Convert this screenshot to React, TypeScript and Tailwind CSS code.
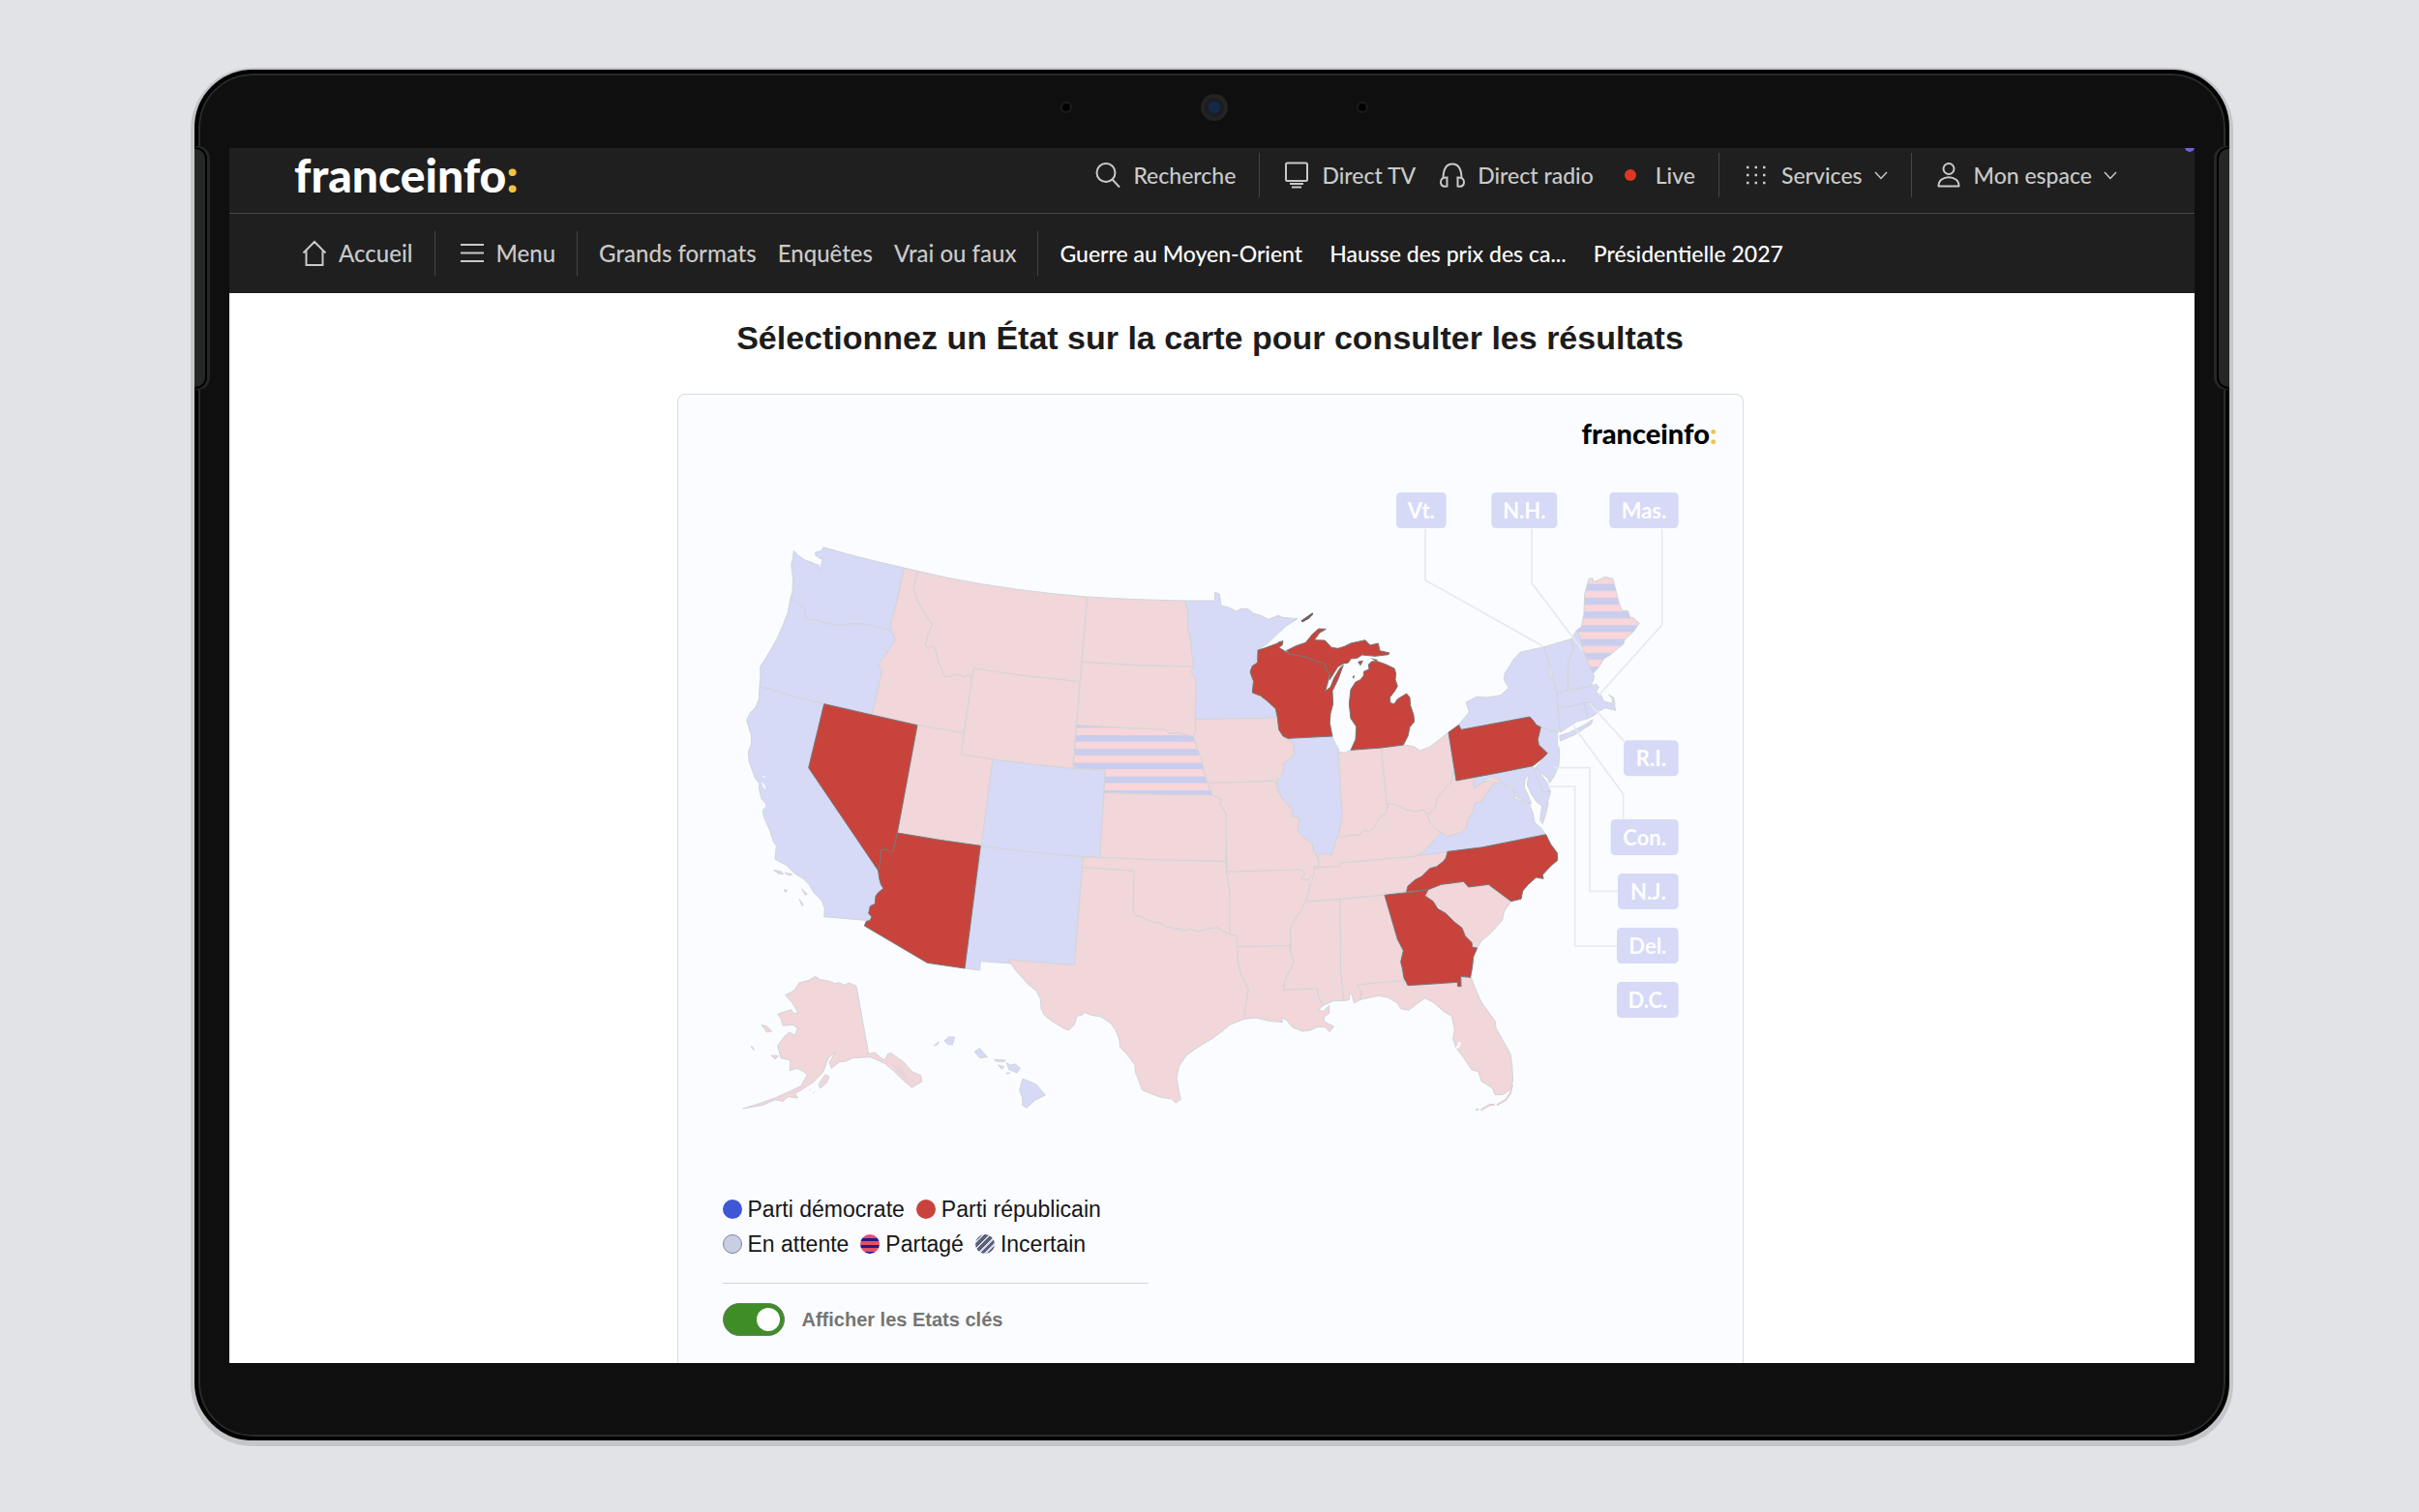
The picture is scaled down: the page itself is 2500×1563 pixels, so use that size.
import { useState, type ReactNode } from "react";
import clsx from "clsx";

type Party = "dem" | "rep" | "split";
type Sheet = "west" | "mid" | "east" | "southeast" | "south" | "pacific";

interface StateShape {
  id: string;
  party: Party;
  sheet: Sheet;
  swing?: boolean;
  d: string;
}

// The map is drawn in several sheets, each with its own origin
const SHEETS: Record<Sheet, string> = {
  west: "translate(0 0)",
  mid: "translate(1020 90)",
  east: "translate(1920 -150)",
  southeast: "translate(1920 750)",
  south: "translate(720 990)",
  pacific: "translate(-120 1350)",
};

const STATES: StateShape[] = [
  // West
  { id: "WA", party: "dem", sheet: "west", d: "M238,115 L250,128 L275,145 L290,149 L303,156 L316,160 L320,174 L325,152 L328,140 L318,139 L312,133 L306,130 L305,120 L322,116 L330,104 L400,124 L490,147 L580,168 L568,225 L556,280 L540,335 L540,361 L500,352 L460,343 L420,341 L380,347 L345,341 L310,331 L285,328 L274,318 L272,298 L262,284 L246,274 L228,262 L234,240 L236,200 L230,160 L235,140Z" },
  { id: "OR", party: "dem", sheet: "west", d: "M228,262 L246,274 L262,284 L272,298 L274,318 L285,328 L310,331 L345,341 L380,347 L420,341 L460,343 L500,352 L540,361 L545,375 L554,390 L545,405 L530,428 L515,448 L503,465 L505,478 L513,484 L500,540 L480,622 L332,590 L240,568 L160,543 L132,537 L135,500 L134,475 L150,450 L165,425 L185,390 L205,345 L220,305Z" },
  { id: "CA", party: "dem", sheet: "west", d: "M132,537 L160,543 L240,568 L332,590 L284,788 L500,1107 L503,1130 L516,1162 L500,1175 L492,1186 L490,1210 L476,1217 L472,1240 L480,1250 L474,1262 L332,1250 L334,1225 L325,1200 L300,1175 L285,1150 L270,1134 L240,1115 L215,1090 L180,1072 L184,1030 L175,1018 L165,985 L145,940 L142,920 L153,908 L151,898 L138,885 L130,850 L132,838 L118,820 L100,770 L97,740 L106,715 L107,690 L92,640 L105,615 L120,600 L130,575Z M175,1105 L200,1110 L206,1118 L190,1116Z M210,1114 L234,1118 L225,1122Z M208,1166 L218,1168 L212,1174Z M263,1163 L280,1180 L274,1183Z M255,1196 L268,1212 L264,1216Z" },
  { id: "ID", party: "rep", sheet: "west", d: "M580,168 L622,178 L611,225 L612,243 L622,270 L632,290 L650,320 L668,345 L655,370 L647,410 L655,417 L672,410 L680,430 L686,460 L697,480 L706,505 L722,505 L745,498 L770,508 L780,496 L790,515 L766,680 L621,656 L480,624 L513,484 L505,478 L503,465 L515,448 L530,428 L554,390 L540,361 L540,335 L556,280 L568,225Z" },
  { id: "MT", party: "rep", sheet: "west", d: "M622,178 L720,200 L820,218 L940,236 L1050,249 L1148,258 L1126,521 L960,504 L797,480 L790,515 L780,496 L770,508 L745,498 L722,505 L706,505 L697,480 L686,460 L680,430 L672,410 L655,417 L647,410 L655,370 L668,345 L650,320 L632,290 L622,270 L612,243 L611,225Z" },
  { id: "WY", party: "rep", sheet: "west", d: "M797,480 L960,504 L1126,521 L1103,790 L980,778 L855,762 L757,747 L766,680 L790,515Z" },
  { id: "UT", party: "rep", sheet: "west", d: "M621,656 L766,680 L757,747 L855,762 L820,1030 L559,990Z" },
  { id: "CO", party: "dem", sheet: "west", d: "M855,762 L980,778 L1103,790 L1203,798 L1188,1067 L1080,1060 L950,1047 L820,1030Z" },
  { id: "NM", party: "dem", sheet: "west", d: "M820,1030 L950,1047 L1080,1060 L1135,1067 L1110,1400 L905,1385 L909,1395 L817,1388 L815,1416 L768,1410Z" },
  // Plains and Midwest
  { id: "ND", party: "rep", sheet: "mid", d: "M128,168 L280,176 L431,180 L440,215 L440,260 L448,300 L452,340 L459,384 L280,380 L111,370Z" },
  { id: "SD", party: "rep", sheet: "mid", d: "M111,370 L280,380 L459,384 L450,400 L465,425 L463,548 L465,575 L458,603 L435,597 L415,590 L385,592 L368,580 L230,574 L95,566Z" },
  { id: "NE", party: "split", sheet: "mid", d: "M95,566 L230,574 L368,580 L385,592 L415,590 L435,597 L458,603 L470,640 L482,670 L490,710 L500,745 L517,783 L350,781 L180,775 L183,706 L85,698Z" },
  { id: "KS", party: "rep", sheet: "mid", d: "M180,775 L350,781 L517,783 L530,790 L545,795 L540,810 L558,840 L558,988 L360,984 L167,976Z" },
  { id: "OK", party: "rep", sheet: "south", d: "M415,75 L467,76 L660,84 L858,89 L860,120 L870,180 L870,315 L850,305 L830,294 L800,298 L770,306 L745,298 L722,305 L715,296 L700,299 L685,291 L675,294 L660,281 L635,277 L605,267 L600,260 L580,258 L570,245 L573,118 L412,107Z" },
  { id: "TX", party: "rep", sheet: "south", d: "M412,107 L573,118 L570,245 L580,258 L600,260 L605,267 L635,277 L660,281 L675,294 L685,291 L700,299 L715,296 L722,305 L745,298 L770,306 L800,298 L830,294 L850,305 L870,315 L893,320 L895,400 L905,440 L928,485 L920,530 L913,578 L870,595 L850,612 L820,635 L770,665 L735,690 L712,725 L705,760 L712,800 L718,828 L712,830 L703,838 L690,825 L655,820 L625,808 L598,797 L585,760 L578,745 L576,720 L550,685 L530,665 L527,640 L515,610 L500,590 L470,570 L440,565 L420,557 L412,565 L396,568 L388,595 L370,612 L355,606 L320,585 L295,565 L285,545 L283,515 L270,490 L245,470 L205,425 L183,393 L388,410Z" },
  { id: "MN", party: "dem", sheet: "mid", d: "M431,180 L523,180 L524,153 L538,160 L543,195 L570,202 L590,212 L605,205 L625,205 L645,220 L665,225 L690,238 L720,226 L735,232 L780,236 L745,258 L715,285 L690,310 L665,328 L657,335 L656,370 L640,385 L633,400 L638,430 L640,465 L665,480 L685,490 L712,515 L718,543 L463,548 L465,425 L450,400 L459,384 L452,340 L448,300 L440,260 L440,215Z" },
  { id: "IA", party: "rep", sheet: "mid", d: "M463,548 L718,543 L722,580 L735,595 L750,607 L768,625 L770,655 L760,670 L735,685 L738,705 L720,725 L717,748 L705,738 L600,743 L500,745 L490,710 L482,670 L470,640 L458,603 L465,575Z" },
  { id: "MO", party: "rep", sheet: "mid", d: "M500,745 L600,743 L705,738 L717,748 L718,765 L735,795 L765,830 L765,850 L788,853 L780,890 L800,915 L825,930 L830,955 L845,975 L848,1000 L832,1008 L830,1030 L820,1045 L790,1046 L802,1028 L795,1014 L560,1021 L558,840 L540,810 L545,795 L530,790 L517,783Z" },
  { id: "IL", party: "dem", sheet: "mid", d: "M750,607 L888,600 L893,615 L907,640 L918,845 L915,870 L905,900 L903,930 L895,940 L885,968 L855,962 L843,978 L830,955 L825,930 L800,915 L780,890 L788,853 L765,850 L765,830 L735,795 L718,765 L717,740 L738,705 L735,685 L760,670 L770,655 L768,625Z" },
  { id: "IN", party: "rep", sheet: "mid", d: "M906,648 L925,652 L945,643 L1040,636 L1058,825 L1050,845 L1035,850 L1020,880 L1003,897 L985,890 L970,908 L950,906 L930,910 L905,914 L915,870 L918,845Z" },
  { id: "AR", party: "rep", sheet: "mid", d: "M560,1021 L795,1014 L802,1028 L790,1046 L820,1045 L815,1080 L805,1113 L785,1150 L765,1180 L757,1200 L760,1225 L757,1250 L593,1253 L593,1220 L570,1215 L570,1080Z" },
  { id: "TN", party: "rep", sheet: "mid", d: "M832,1008 L910,1003 L912,993 L1140,972 L1250,957 L1245,975 L1225,995 L1195,1020 L1170,1040 L1140,1055 L1120,1080 L1050,1092 L910,1105 L805,1113 L815,1080 L825,1045 L830,1030Z" },
  { id: "LA", party: "rep", sheet: "south", d: "M893,353 L1057,350 L1058,370 L1070,400 L1055,430 L1040,460 L1037,487 L1142,482 L1145,510 L1160,535 L1145,550 L1160,553 L1178,535 L1178,560 L1163,570 L1162,585 L1192,600 L1180,617 L1165,602 L1140,602 L1120,612 L1095,615 L1065,603 L1045,580 L1030,573 L1034,587 L990,583 L950,573 L913,578 L920,530 L928,485 L905,440 L895,400Z" },
  { id: "MS", party: "rep", sheet: "south", d: "M1105,213 L1212,206 L1214,430 L1224,520 L1190,521 L1160,535 L1145,510 L1142,482 L1037,487 L1040,460 L1055,430 L1070,400 L1058,370 L1060,325 L1057,300 L1065,280 L1085,250Z" },
  { id: "AL", party: "rep", sheet: "southeast", d: "M12,445 L150,433 L190,570 L208,605 L200,640 L205,670 L212,700 L65,711 L78,735 L75,757 L55,767 L48,738 L42,740 L40,758 L24,760 L14,670Z" },
  { id: "FL", party: "rep", sheet: "southeast", d: "M65,711 L205,698 L222,714 L378,704 L380,716 L388,716 L386,688 L418,688 L430,720 L450,765 L493,825 L495,845 L540,925 L545,960 L548,1010 L535,1040 L515,1052 L492,1052 L485,1032 L450,1010 L440,980 L420,975 L390,930 L372,908 L362,880 L367,850 L358,808 L335,795 L300,765 L275,752 L250,770 L225,790 L200,785 L190,768 L160,750 L130,745 L75,757 L78,735Z" },
  { id: "SC", party: "rep", sheet: "southeast", d: "M275,435 L285,416 L325,400 L395,391 L408,398 L410,408 L472,400 L542,452 L520,485 L515,510 L480,550 L450,575 L437,597 L422,595 L420,580 L400,560 L390,535 L365,515 L340,490 L300,452Z" },
  // East
  { id: "OH", party: "rep", sheet: "east", d: "M140,876 L208,867 L240,872 L260,885 L290,873 L320,850 L348,828 L365,940 L358,980 L330,1010 L315,1030 L305,1065 L285,1083 L270,1068 L245,1074 L215,1068 L190,1055 L162,1048 L158,1065Z" },
  { id: "KY", party: "rep", sheet: "east", d: "M158,1065 L162,1048 L190,1055 L215,1068 L245,1074 L270,1068 L283,1085 L290,1105 L305,1125 L325,1138 L270,1200 L245,1212 L12,1233 L10,1243 L-68,1248 L-52,1240 L-57,1218 L-45,1202 L-15,1208 L-5,1180 L3,1152 L30,1150 L50,1146 L70,1148 L85,1130 L103,1137 L120,1120 L135,1090 L150,1085Z" },
  { id: "WV", party: "rep", sheet: "east", d: "M370,978 L425,970 L428,1000 L450,985 L480,975 L490,962 L515,985 L490,985 L475,1005 L450,1045 L430,1048 L425,1075 L410,1095 L405,1122 L385,1140 L345,1152 L325,1138 L305,1125 L290,1105 L283,1085 L305,1065 L315,1030 L330,1010 L358,980 L364,945Z" },
  { id: "VA", party: "dem", sheet: "east", d: "M270,1200 L325,1138 L345,1152 L385,1140 L405,1122 L410,1095 L425,1075 L430,1048 L450,1045 L475,1005 L490,985 L515,987 L548,1005 L556,1035 L598,1047 L610,1080 L615,1108 L635,1125 L648,1143 L450,1185 L345,1198 L245,1212Z M638,1055 L658,1045 L650,1080 L640,1112 L632,1100Z" },
  { id: "MD", party: "dem", sheet: "east", d: "M425,968 L610,935 L625,960 L640,1012 L665,1010 L655,1045 L640,1058 L622,1045 L605,1020 L592,990 L598,955 L585,975 L583,1000 L598,1030 L605,1050 L560,1030 L548,1000 L515,985 L490,962 L450,985 L428,1000Z" },
  { id: "DE", party: "dem", sheet: "east", d: "M612,940 L625,936 L635,960 L655,985 L663,1010 L640,1014Z" },
  { id: "NJ", party: "dem", sheet: "east", d: "M632,812 L685,828 L685,865 L692,880 L690,930 L675,965 L662,985 L655,970 L630,950 L620,935 L655,893 L628,865Z" },
  { id: "NY", party: "dem", sheet: "east", d: "M385,820 L381,803 L412,765 L402,735 L435,718 L470,720 L510,713 L535,690 L520,665 L523,645 L550,602 L570,580 L645,563 L655,600 L662,640 L684,705 L688,755 L692,800 L690,828 L632,812 L612,795 L600,780Z M692,838 L720,830 L770,805 L795,788 L790,803 L740,835 L695,855Z" },
  { id: "VT", party: "dem", sheet: "east", d: "M645,563 L730,538 L735,570 L720,605 L718,697 L684,707 L670,650 L655,600Z" },
  { id: "NH", party: "dem", sheet: "east", d: "M730,538 L745,512 L755,530 L765,570 L785,625 L800,655 L790,685 L718,697 L720,605 L735,570Z" },
  { id: "ME", party: "split", sheet: "east", d: "M745,512 L760,500 L768,460 L770,400 L783,352 L795,350 L798,362 L815,355 L832,346 L858,352 L875,420 L885,450 L905,452 L910,470 L922,474 L940,490 L920,518 L895,540 L890,555 L870,570 L850,588 L830,600 L815,625 L797,645 L785,625 L765,570 L755,530Z" },
  { id: "MA", party: "dem", sheet: "east", d: "M684,707 L790,685 L805,678 L814,688 L805,703 L820,712 L830,732 L862,740 L866,760 L835,752 L815,762 L800,748 L785,735 L770,738 L688,755Z M845,712 L860,720 L864,742 L857,738 L855,722Z" },
  { id: "CT", party: "dem", sheet: "east", d: "M688,755 L770,738 L780,785 L745,795 L695,828 L690,790Z" },
  { id: "RI", party: "dem", sheet: "east", d: "M770,738 L792,734 L812,765 L800,775 L780,785Z" },
  // Alaska and Hawaii
  { id: "AK", party: "rep", sheet: "pacific", d: "M425,85 L440,95 L470,100 L485,107 L500,105 L515,112 L530,105 L552,115 L590,325 L610,321 L625,335 L640,345 L650,325 L660,323 L700,352 L725,380 L752,392 L755,412 L740,420 L725,430 L700,410 L670,380 L640,355 L595,335 L540,338 L520,348 L500,350 L475,370 L468,352 L488,320 L465,338 L450,380 L420,412 L385,435 L362,448 L370,462 L340,458 L325,472 L300,468 L260,485 L240,488 L200,495 L240,483 L300,462 L345,442 L380,425 L400,390 L385,378 L368,370 L345,377 L348,345 L318,338 L308,300 L330,270 L345,258 L362,268 L370,245 L355,235 L325,238 L318,215 L308,202 L350,188 L358,200 L372,198 L352,165 L332,143 L360,128 L375,105 L405,97Z M435,420 L455,390 L468,395 L460,415 L440,432Z M258,235 L275,240 L290,255 L275,258Z M225,302 L230,304 L235,314Z M288,330 L310,332 L300,342Z" },
  { id: "HI", party: "dem", sheet: "pacific", d: "M793,300 L808,287 L803,297Z M825,285 L840,272 L857,274 L850,297 L835,295Z M918,318 L935,308 L958,335 L935,338Z M980,343 L1015,345 L1010,350 L985,348Z M992,360 L1010,365 L1003,373Z M1018,384 L1028,384 L1020,388Z M1018,352 L1030,360 L1045,357 L1060,370 L1050,384 L1025,374Z M1068,402 L1110,420 L1138,453 L1105,470 L1080,493 L1068,485 L1066,460 L1058,437Z" },
  // Swing states come last so that their outlines stay on top
  { id: "NV", party: "rep", swing: true, sheet: "west", d: "M332,590 L480,624 L621,656 L559,990 L553,1020 L547,1045 L538,1051 L524,1040 L508,1043 L507,1075 L500,1107 L284,788Z" },
  { id: "AZ", party: "rep", swing: true, sheet: "west", d: "M559,990 L690,1012 L817,1030 L768,1410 L652,1393 L457,1278 L463,1264 L474,1262 L480,1250 L470,1240 L475,1217 L490,1210 L492,1186 L500,1175 L516,1162 L508,1150 L503,1130 L500,1107 L507,1075 L508,1043 L524,1040 L538,1051 L547,1045 L553,1020Z" },
  { id: "WI", party: "rep", swing: true, sheet: "mid", d: "M657,333 L675,328 L718,312 L722,308 L735,305 L732,318 L722,325 L755,345 L800,353 L845,370 L855,370 L870,385 L870,398 L880,405 L875,430 L866,460 L882,448 L893,420 L912,388 L922,380 L905,425 L888,460 L890,500 L882,530 L880,560 L888,600 L750,607 L735,600 L722,580 L718,543 L712,515 L685,490 L665,475 L640,465 L643,430 L633,400 L640,382 L656,372Z" },
  { id: "MI", party: "rep", swing: true, sheet: "mid", d: "M745,335 L775,320 L805,310 L825,285 L845,267 L868,268 L848,280 L832,302 L865,303 L885,325 L905,328 L925,322 L945,312 L990,302 L1005,318 L1030,312 L1035,335 L1065,342 L1062,347 L1020,352 L980,348 L965,358 L945,360 L938,372 L922,375 L905,385 L880,425 L880,405 L870,398 L870,385 L855,370 L845,370 L800,353 L755,345Z M1000,378 L1010,368 L1028,368 L1055,378 L1080,390 L1085,405 L1083,425 L1090,445 L1080,462 L1066,480 L1068,497 L1080,500 L1090,485 L1118,468 L1128,480 L1130,505 L1140,535 L1142,555 L1128,572 L1122,600 L1108,627 L1040,636 L945,643 L960,610 L962,570 L945,545 L940,500 L945,455 L960,432 L975,425 L985,412 L985,400 L1002,392Z M792,243 L828,220 L812,236Z M968,370 L982,366 L975,380Z" },
  { id: "PA", party: "rep", swing: true, sheet: "east", d: "M348,828 L380,805 L387,820 L600,780 L612,793 L620,805 L634,812 L625,850 L628,867 L655,893 L640,908 L610,932 L490,956 L372,978Z" },
  { id: "NC", party: "rep", swing: true, sheet: "southeast", d: "M345,298 L450,285 L650,245 L665,275 L685,302 L686,325 L665,343 L640,370 L642,382 L620,378 L595,400 L578,420 L573,445 L542,452 L472,400 L410,408 L395,391 L325,400 L285,416 L218,422 L222,405 L245,385 L265,375 L290,350 L310,345 L330,330 L340,318Z" },
  { id: "GA", party: "rep", swing: true, sheet: "southeast", d: "M150,433 L218,425 L285,416 L275,435 L300,452 L315,475 L340,490 L365,515 L390,535 L400,560 L420,580 L422,595 L437,597 L425,625 L422,655 L416,688 L386,685 L387,716 L377,716 L376,703 L222,713 L210,690 L205,660 L200,640 L208,605 L190,570Z" },
];

const DIMMED: Record<Party, string> = {
  dem: "fill-[#d6daf7] stroke-[#d2d5d8]",
  rep: "fill-[#f1d6da] stroke-[#d2d5d8]",
  split: "stroke-[#d2d5d8]",
};

const FULL: Record<Party, string> = {
  dem: "fill-[#3e57d6] stroke-[#777777]",
  rep: "fill-[#c8433c] stroke-[#777777]",
  split: "stroke-[#777777]",
};

const LABELS = [
  { text: "Vt.", x: 186, y: 84, w: 155 },
  { text: "N.H.", x: 481, y: 84, w: 204 },
  { text: "Mas.", x: 847, y: 84, w: 214 },
  { text: "R.I.", x: 891, y: 853, w: 170 },
  { text: "Con.", x: 851, y: 1098, w: 210 },
  { text: "N.J.", x: 873, y: 1266, w: 188 },
  { text: "Del.", x: 870, y: 1434, w: 191 },
  { text: "D.C.", x: 870, y: 1602, w: 191 },
];

function ElectionMap({ keyOnly }: { keyOnly: boolean }) {
  return (
    <svg viewBox="-120 -150 3300 2100" className="block w-full" role="img" aria-label="Carte des résultats par État">
      <defs>
        <pattern id="split-mid" y="597" width="60" height="42.7" patternUnits="userSpaceOnUse">
          <rect width="60" height="43" fill="#f8d6da" />
          <rect width="60" height="20" fill="#c9cdee" />
        </pattern>
        <pattern id="split-east" y="368" width="60" height="42.7" patternUnits="userSpaceOnUse">
          <rect width="60" height="43" fill="#f8d6da" />
          <rect width="60" height="21" fill="#c9cdee" />
        </pattern>
      </defs>
      <g strokeWidth="3" strokeLinejoin="round">
        {STATES.map((s) => {
          const tone = keyOnly && !s.swing ? DIMMED : FULL;
          const fill = s.party === "split" ? (s.sheet === "mid" ? "url(#split-mid)" : "url(#split-east)") : undefined;
          return <path key={s.id} d={s.d} transform={SHEETS[s.sheet]} fill={fill} className={tone[s.party]} />;
        })}
      </g>
      {/* San Francisco bay, Tampa bay, Florida keys */}
      <path d="M141,814 L150,813 L147,820Z M138,832 L144,836 L151,850 L148,856 L142,846Z" fill="#fafcff" />
      <g transform={SHEETS.southeast} fill="none">
        <path d="M372,908 L380,900 L384,890 L378,896" stroke="#fafcff" strokeWidth="7" />
        <path d="M433,1098 H442 M448,1100 L475,1084 L492,1082 M498,1084 L525,1068 L540,1048 L546,1020" stroke="#e0d0d5" strokeWidth="6" />
      </g>
      {/* Michigan straits and Door county islands */}
      <g transform={SHEETS.mid} className="fill-[#8a5552]">
        <path d="M1005,357 L1030,364 L1022,367Z M950,414 L957,412 L954,424Z M926,366 L934,370 L928,376Z" />
        <path d="M790,242 L826,217 L829,221 L814,236 L796,247Z" className="fill-[#6f5f5d]" />
      </g>
      <g transform={SHEETS.pacific} fill="none" stroke="#dcd4d8" strokeWidth="3">
        <path d="M665,360 L690,378 L712,412 M680,355 L700,385 L735,418 M672,372 L705,395 M405,440 L410,436 M418,448 L422,442" />
      </g>
      <g transform={SHEETS.east}>
        <path
          d="M276,197 V356 L640,560 M606,197 V365 L765,575 M1010,197 V495 L815,712 M893,856 L785,738 M890,1098 V1020 L735,808 M675,938 H786 V1321 H873 M655,996 H740 V1491 H870"
          fill="none"
          stroke="#e8e9ed"
          strokeWidth="5"
        />
        {LABELS.map((l) => (
          <g key={l.text}>
            <rect x={l.x} y={l.y} width={l.w} height="111" rx="14" className="fill-[#d6daf7]" />
            <text
              x={l.x + l.w / 2}
              y={l.y + 80}
              textAnchor="middle"
              className="fill-[#fdfdff] font-['Lato',sans-serif] text-[66px] font-bold"
            >
              {l.text}
            </text>
          </g>
        ))}
      </g>
    </svg>
  );
}

function Icon({ children, className = "size-7" }: { children: ReactNode; className?: string }) {
  return (
    <svg viewBox="0 0 28 28" className={clsx("shrink-0", className)} fill="none" stroke="currentColor" strokeWidth="2" aria-hidden="true">
      {children}
    </svg>
  );
}

function Chevron() {
  return (
    <svg viewBox="0 0 14 14" className="ml-3 size-[14px]" fill="none" stroke="currentColor" strokeWidth="1.5" aria-hidden="true">
      <path d="M1 4 L7 10.5 L13 4" />
    </svg>
  );
}

function Separator() {
  return <span className="h-[46px] w-px shrink-0 bg-[#454545]" />;
}

function Logo({ className }: { className: string }) {
  return (
    <a href="#" className={clsx("font-['Lato',sans-serif] font-black", className)}>
      franceinfo<span className="text-[#f2c443]">:</span>
    </a>
  );
}

function Header() {
  return (
    <header className="bg-[#1f1f1f] font-['Lato',sans-serif] text-[23px] leading-7 font-medium whitespace-nowrap text-[#c9c9c9]">
      <div className="flex h-[68px] items-center border-b border-[#484848] pr-20 pb-3 pl-[67px]">
        <Logo className="text-[48px] leading-none text-white" />
        <nav className="ml-auto flex items-center">
          <a href="#" className="flex items-center gap-3">
            <Icon>
              <circle cx="12" cy="11.5" r="9.5" />
              <path d="M18.5 18.5 L26 26.5" />
            </Icon>
            Recherche
          </a>
          <span className="w-6" />
          <Separator />
          <a href="#" className="ml-6 flex items-center gap-3">
            <Icon>
              <rect x="3" y="1.5" width="22" height="18.500" rx="1.5" />
              <path d="M7 23 H21 M9 26.500 H19" />
            </Icon>
            Direct TV
          </a>
          <a href="#" className="ml-6 flex items-center gap-3">
            <Icon>
              <path d="M4.500 18 C4.500 7 8 2.500 14 2.500 C20 2.500 23.500 7 23.500 18" />
              <path d="M8.500 16.500 C4 16 1.500 18.500 2 22 C2.400 25 5 26.500 8.500 25.500 Z M19.500 16.500 C24 16 26.500 18.500 26 22 C25.600 25 23 26.500 19.500 25.500 Z" />
            </Icon>
            Direct radio
          </a>
          <a href="#" className="ml-8 flex items-center gap-5">
            <span className="size-3 rounded-full bg-[#de3721]" />
            Live
          </a>
          <span className="w-6" />
          <Separator />
          <button type="button" className="ml-6 flex items-center">
            <Icon className="mr-3 size-7">
              <path d="M4 6h2.500 M12.500 6h2.500 M21 6h2.500 M4 14h2.500 M12.500 14h2.500 M21 14h2.500 M4 22h2.500 M12.500 22h2.500 M21 22h2.500" strokeWidth="2.500" />
            </Icon>
            Services
            <Chevron />
          </button>
          <span className="w-6" />
          <Separator />
          <button type="button" className="ml-6 flex items-center">
            <Icon className="mr-3 size-7">
              <circle cx="14" cy="7.500" r="5.500" />
              <path d="M3.500 25.500 C3 13 25 13 24.500 25.500 Z" strokeLinejoin="round" />
            </Icon>
            Mon espace
            <Chevron />
          </button>
        </nav>
      </div>

      <nav className="flex h-[82px] items-center pb-px pl-[74px] text-[24px]">
        <a href="#" className="flex items-center gap-[11px]">
          <Icon>
            <path d="M2.500 13.500 L14 2 L25.500 13.500 M5.500 11 V26 H22.500 V11" />
          </Icon>
          Accueil
        </a>
        <span className="w-[22px]" />
        <Separator />
        <button type="button" className="ml-6 flex items-center gap-[11px]">
          <Icon>
            <path d="M2 5 H26 M2 13.500 H26 M2 22 H26" />
          </Icon>
          Menu
        </button>
        <span className="w-[22px]" />
        <Separator />
        <div className="mx-[22px] flex gap-[22px]">
          <a href="#">Grands formats</a>
          <a href="#">Enquêtes</a>
          <a href="#">Vrai ou faux</a>
        </div>
        <Separator />
        <div className="ml-[22px] flex gap-7 text-[23px] text-white">
          <a href="#">Guerre au Moyen-Orient</a>
          <a href="#">Hausse des prix des ca...</a>
          <a href="#">Présidentielle 2027</a>
        </div>
      </nav>
    </header>
  );
}

function LegendItem({ swatch, children }: { swatch: string; children: ReactNode }) {
  return (
    <li className="flex items-center gap-[6px]">
      <span className={clsx("size-5 rounded-full", swatch)} />
      {children}
    </li>
  );
}

export default function App() {
  const [keyOnly, setKeyOnly] = useState(true);

  return (
    <div className="min-h-screen bg-[#e2e3e7] pt-[72px] pr-[196px] pb-[72px] pl-[201px] font-['Liberation_Sans',Arial,sans-serif]">
      <div className="relative rounded-[60px] border-4 border-black bg-[#0f0f0f] px-8 pb-[76px] shadow-[0_2px_0_4px_#c5c6c8,inset_0_0_0_2px_#2a2a2a]">
        {/* Side clips of the case */}
        <div className="absolute top-[76px] -left-1 h-[250px] w-[13px] rounded-r-[12px] border-2 border-l-0 border-black bg-[#252726] shadow-[2px_0_0_1px_#262626]" />
        <div className="absolute top-[76px] -right-1 h-[250px] w-[13px] rounded-l-[12px] border-2 border-r-0 border-black bg-[#252726] shadow-[-2px_0_0_1px_#262626]" />

        {/* Camera */}
        <div className="flex h-[77px] items-center justify-center gap-[133px] pb-2 pl-1">
          <span className="size-3 rounded-full border-2 border-[#1c1c1c] bg-black" />
          <span className="flex size-7 items-center justify-center rounded-full border-4 border-[#232323] bg-[#1a1d22]">
            <span className="size-3 rounded-full bg-[#14294a]" />
          </span>
          <span className="size-3 rounded-full border-2 border-[#1c1c1c] bg-black" />
        </div>

        <div className="relative overflow-hidden bg-white">
          <span className="absolute -top-[6px] right-0 z-10 size-[10px] rounded-full bg-[#6a63e0]" />
          <Header />

          <main className="pr-1">
            <h1 className="pt-6 pb-9 text-center text-[34px] leading-[44px] font-bold text-[#1c1c1c]">
              Sélectionnez un État sur la carte pour consulter les résultats
            </h1>

            <section className="mx-auto max-w-[1102px] rounded-t-[8px] border border-b-0 border-[#dbdde2] bg-[#fafcff] pb-7">
              <div className="flex h-[73px] justify-end pt-6 pr-[26px]">
                <Logo className="text-[29px] leading-8 text-black" />
              </div>

              <ElectionMap keyOnly={keyOnly} />

              <div className="mt-[51px] ml-[46px] w-[440px]">
                <ul className="flex flex-wrap gap-x-3 text-[23px] leading-9 text-[#161616]">
                  <LegendItem swatch="bg-[#3e57d6]">Parti démocrate</LegendItem>
                  <LegendItem swatch="bg-[#c8433c]">Parti républicain</LegendItem>
                  <LegendItem swatch="border border-[#7f8496] bg-[#c9cee2]">En attente</LegendItem>
                  <LegendItem swatch="bg-[repeating-linear-gradient(180deg,#dc5560_0_4px,#29168c_4px_7px)]">Partagé</LegendItem>
                  <LegendItem swatch="bg-[repeating-linear-gradient(135deg,#d3d8ec_0_2px,#5b6075_2px_5px)]">Incertain</LegendItem>
                </ul>

                <hr className="mt-[22px] mb-5 border-[#d5d6da]" />

                <label className="flex items-center gap-[18px] text-[20px] font-bold text-[#757575]">
                  <input
                    type="checkbox"
                    role="switch"
                    checked={keyOnly}
                    onChange={(e) => setKeyOnly(e.target.checked)}
                    className="flex h-[34px] w-16 appearance-none items-center rounded-full border border-[#6d7a68] bg-[#8b8b8b] px-1 before:size-6 before:rounded-full before:bg-white checked:justify-end checked:bg-[#3f8d27]"
                  />
                  Afficher les Etats clés
                </label>
              </div>
            </section>
          </main>
        </div>
      </div>
    </div>
  );
}
